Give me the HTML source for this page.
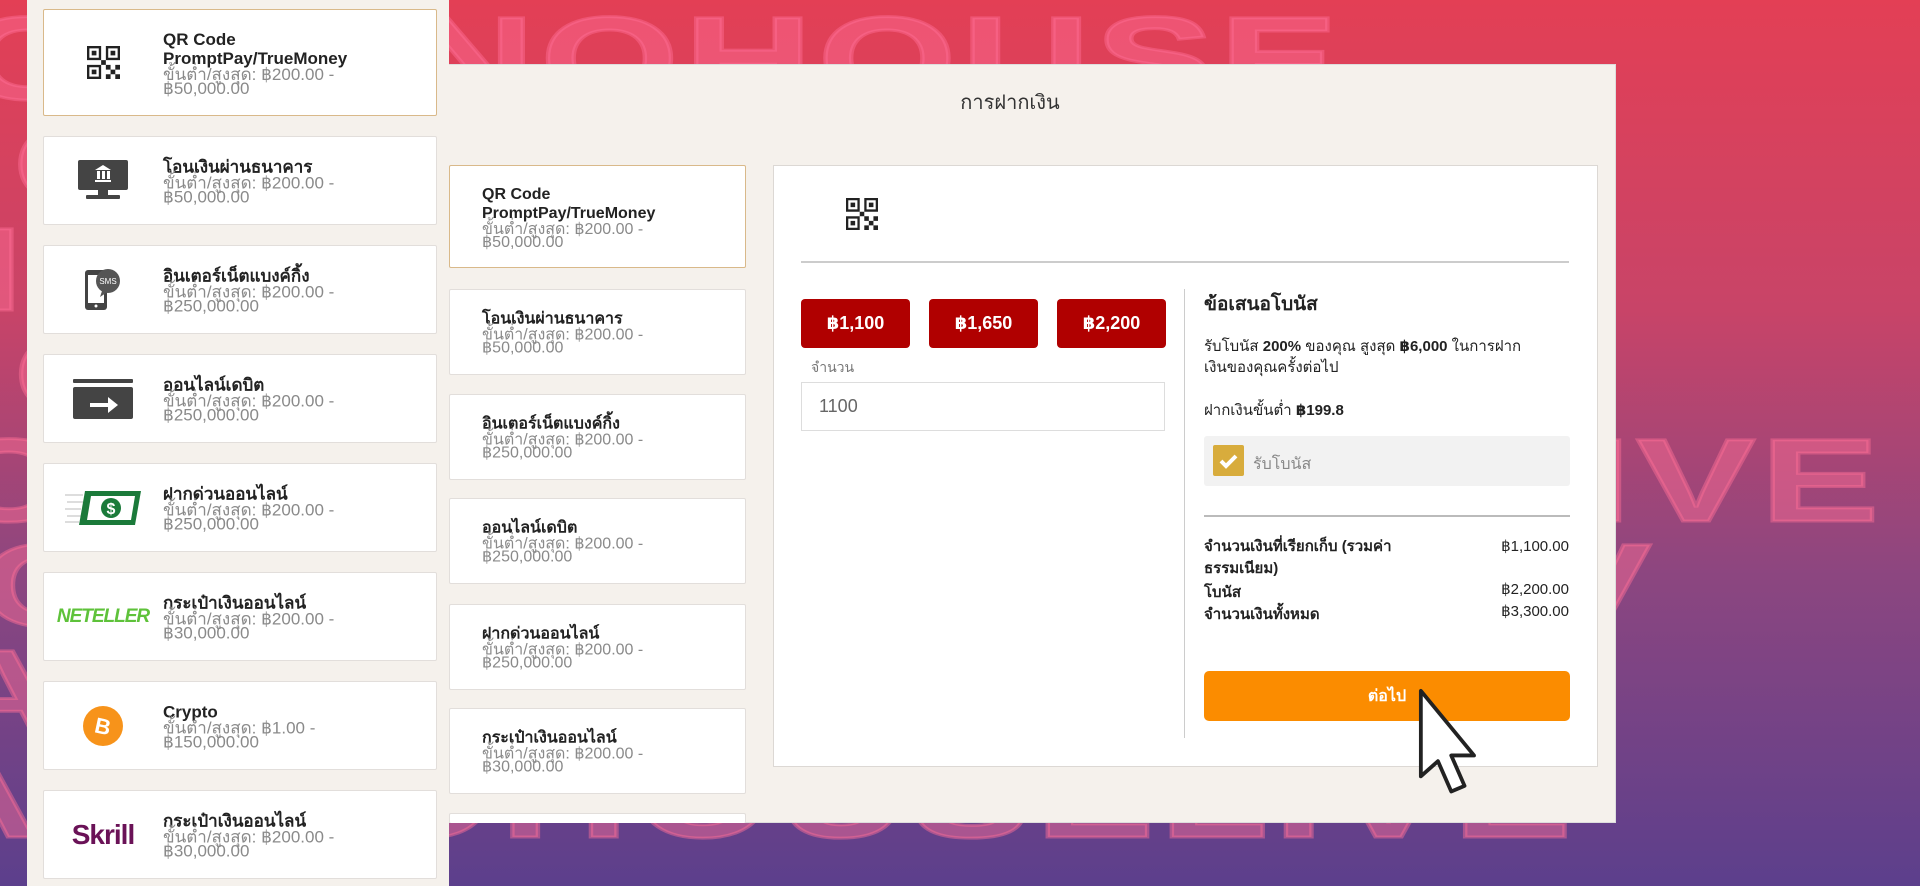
<!DOCTYPE html>
<html style="width:1920px;height:886px;overflow:hidden;background:#5a3f8c"><head><meta charset="utf-8">
<style>
*{margin:0;padding:0;box-sizing:border-box}
body{width:1920px;height:886px;overflow:hidden;position:relative;font-family:"Liberation Sans","DejaVu Sans","Noto Sans CJK SC",sans-serif}
.bg{position:absolute;left:0;top:0;width:1920px;height:886px;background:linear-gradient(180deg,#e33f55 0%,#c84468 35%,#8c4680 65%,#5c3f8c 100%);overflow:hidden}
.bgt{position:absolute;left:0;white-space:nowrap;font-weight:bold;font-size:118px;line-height:105px;color:rgba(255,110,150,0.45);transform-origin:0 0;transform:scaleX(1.5);letter-spacing:4px;-webkit-text-stroke:3px rgba(255,110,150,0.45)}
.abs{position:absolute}
.modal{left:404px;top:64px;width:1212px;height:759px;background:#f5f1ec;border:1px solid #ddd;overflow:hidden}
.title{left:404px;width:1212px;top:86px;text-align:center;font-size:20px;color:#333}
.left{left:27px;top:0;width:422px;height:886px;background:#f5f1ec}
.card{position:absolute;left:43px;width:394px;height:89px;background:#fff;border:1px solid #e2dedb;border-radius:2px}
.card .ic{position:absolute;left:0;width:118px;top:0;bottom:0;display:flex;align-items:center;justify-content:center}
.card .tx{position:absolute;left:119px;top:50%;transform:translateY(-50%);font-size:17px}
.t{font-weight:bold;color:#222;line-height:19px}
.g{color:#8a8a8a;line-height:14px;font-size:17px}
.mc{position:absolute;left:449px;width:297px;background:#fff;border:1px solid #e2dedb;border-radius:2px}
.mc .tx{position:absolute;left:32px;top:50%;transform:translateY(-50%);font-size:16px}
.mc .g{font-size:16px;line-height:13px}
.mc .t{line-height:19px}
.panel{left:773px;top:165px;width:825px;height:602px;background:#fff;border:1px solid #dcd8d4}
.btn{position:absolute;top:299px;width:109px;height:49px;background:#b00000;border-radius:4px;color:#fff;font-weight:bold;font-size:18px;display:flex;align-items:center;justify-content:center}
.row{position:absolute;left:1204px;width:365px;font-size:15px;color:#222;font-weight:bold;display:flex;justify-content:space-between}
.row span:last-child{font-weight:normal}
</style></head><body>
<div class="bg">
<div class="bgt" style="top:7px;left:-40px">CASINOHOUSE</div>
<div class="bgt" style="top:113px;left:-300px">SINOHOUSE</div>
<div class="bgt" style="top:218px;left:-150px">SINOHOUSE</div>
<div class="bgt" style="top:323px;left:-120px">HOUSECASINO</div>
<div class="bgt" style="top:429px;left:-60px">OHOUSECASINOLIVE</div>
<div class="bgt" style="top:534px;left:-20px">CASINOHOUSELIV</div>
<div class="bgt" style="top:640px;left:-200px">CASINOHOUSELIVE</div>
<div class="bgt" style="top:745px;left:-90px">ASINOHOUSELIVE</div>
</div>

<div class="abs modal"></div>
<div class="abs title">การฝากเงิน</div>

<div class="mc" style="top:165px;height:103px;border-color:#d9b98a"><div class="tx"><div class="t">QR Code<br>PromptPay/TrueMoney</div><div class="g">ขั้นต่ำ/สูงสุด: ฿200.00 -<br>฿50,000.00</div></div></div>
<div class="mc" style="top:289px;height:86px"><div class="tx"><div class="t">โอนเงินผ่านธนาคาร</div><div class="g">ขั้นต่ำ/สูงสุด: ฿200.00 -<br>฿50,000.00</div></div></div>
<div class="mc" style="top:394px;height:86px"><div class="tx"><div class="t">อินเตอร์เน็ตแบงค์กิ้ง</div><div class="g">ขั้นต่ำ/สูงสุด: ฿200.00 -<br>฿250,000.00</div></div></div>
<div class="mc" style="top:498px;height:86px"><div class="tx"><div class="t">ออนไลน์เดบิต</div><div class="g">ขั้นต่ำ/สูงสุด: ฿200.00 -<br>฿250,000.00</div></div></div>
<div class="mc" style="top:604px;height:86px"><div class="tx"><div class="t">ฝากด่วนออนไลน์</div><div class="g">ขั้นต่ำ/สูงสุด: ฿200.00 -<br>฿250,000.00</div></div></div>
<div class="mc" style="top:708px;height:86px"><div class="tx"><div class="t">กระเป๋าเงินออนไลน์</div><div class="g">ขั้นต่ำ/สูงสุด: ฿200.00 -<br>฿30,000.00</div></div></div>
<div class="mc" style="top:813px;height:10px;border-bottom:none"></div>

<div class="abs panel"></div>
<svg class="abs" style="left:846px;top:198px" width="32" height="32" viewBox="0 0 7 7"><path fill="#222" d="M0 0h3v3H0zM4 0h3v3H4zM0 4h3v3H0z"/><path fill="#fff" d="M.5.5h2v2h-2zM4.5.5h2v2h-2zM.5 4.5h2v2h-2z"/><path fill="#222" d="M1 1h1v1H1zM5 1h1v1H5zM1 5h1v1H1zM4 4h1v1H4zM5 5h1v1H5zM6 4h1v1H6zM4 6h1v1H4zM6 6h1v1H6zM3 3h1v1H3z"/></svg>
<div class="abs" style="left:801px;top:261px;width:768px;height:2px;background:#ccc"></div>
<div class="btn" style="left:801px">฿1,100</div>
<div class="btn" style="left:929px">฿1,650</div>
<div class="btn" style="left:1057px">฿2,200</div>
<div class="abs" style="left:811px;top:357px;font-size:14px;color:#777">จำนวน</div>
<div class="abs" style="left:801px;top:382px;width:364px;height:49px;border:1px solid #ddd;font-size:18px;color:#666;padding:13px 17px">1100</div>
<div class="abs" style="left:1184px;top:289px;width:1px;height:449px;background:#ccc"></div>
<div class="abs" style="left:1204px;top:289px;font-size:19px;font-weight:bold;color:#222">ข้อเสนอโบนัส</div>
<div class="abs" style="left:1204px;top:336px;width:370px;font-size:15px;line-height:21px;color:#222">รับโบนัส <b>200%</b> ของคุณ สูงสุด <b>฿6,000</b> ในการฝาก<br>เงินของคุณครั้งต่อไป</div>
<div class="abs" style="left:1204px;top:398px;font-size:15px;color:#222">ฝากเงินขั้นต่ำ <b>฿199.8</b></div>
<div class="abs" style="left:1204px;top:436px;width:366px;height:50px;background:#f2f2f2;border-radius:3px"></div>
<div class="abs" style="left:1213px;top:445px;width:31px;height:31px;background:#d8ac3c;border-radius:2px"><svg width="31" height="31" viewBox="0 0 31 31"><path d="M8 16l5 5 10-10" stroke="#fff" stroke-width="4" fill="none"/></svg></div>
<div class="abs" style="left:1253px;top:452px;font-size:16px;color:#888">รับโบนัส</div>
<div class="abs" style="left:1204px;top:515px;width:366px;height:2px;background:#bbb"></div>
<div class="row" style="top:536px;line-height:22px"><span>จำนวนเงินที่เรียกเก็บ (รวมค่า<br>ธรรมเนียม)</span><span>฿1,100.00</span></div>
<div class="row" style="top:580px"><span>โบนัส</span><span>฿2,200.00</span></div>
<div class="row" style="top:602px"><span>จำนวนเงินทั้งหมด</span><span>฿3,300.00</span></div>
<div class="abs" style="left:1204px;top:671px;width:366px;height:50px;background:#fb8c00;border-radius:5px;color:#fff;font-weight:bold;font-size:16px;display:flex;align-items:center;justify-content:center">ต่อไป</div>
<svg class="abs" style="left:1418px;top:688px" width="60" height="118" viewBox="0 0 60 118"><path d="M3 3v90l18-16 14 32 14-6-14-32h24z" fill="#fff" stroke="#222" stroke-width="4" stroke-linejoin="round" transform="scale(0.95)"/></svg>

<div class="abs left"></div>
<div class="card" style="top:9px;height:107px;border-color:#d9b98a"><div class="ic"><svg width="33" height="33" viewBox="0 0 7 7"><path fill="#222" d="M0 0h3v3H0zM4 0h3v3H4zM0 4h3v3H0z"/><path fill="#fff" d="M.5.5h2v2h-2zM4.5.5h2v2h-2zM.5 4.5h2v2h-2z"/><path fill="#222" d="M1 1h1v1H1zM5 1h1v1H5zM1 5h1v1H1zM4 4h1v1H4zM5 5h1v1H5zM6 4h1v1H6zM4 6h1v1H4zM6 6h1v1H6zM3 3h1v1H3z"/></svg></div><div class="tx"><div class="t">QR Code<br>PromptPay/TrueMoney</div><div class="g">ขั้นต่ำ/สูงสุด: ฿200.00 -<br>฿50,000.00</div></div></div>
<div class="card" style="top:136px"><div class="ic"><svg width="50" height="42" viewBox="0 0 50 42"><rect x="0" y="0" width="50" height="30" rx="2" fill="#444"/><rect x="20" y="30" width="10" height="5" fill="#444"/><rect x="8" y="35" width="34" height="4" rx="1" fill="#444"/><path d="M17 10l8-5 8 5zM17 22h16v-2H17zM19 11h3v8h-3zM24 11h3v8h-3zM29 11h3v8h-3z" fill="#fff"/></svg></div><div class="tx"><div class="t">โอนเงินผ่านธนาคาร</div><div class="g">ขั้นต่ำ/สูงสุด: ฿200.00 -<br>฿50,000.00</div></div></div>
<div class="card" style="top:245px"><div class="ic"><svg width="38" height="42" viewBox="0 0 38 42"><rect x="1" y="1" width="22" height="40" rx="3" fill="#444"/><rect x="4" y="6" width="16" height="28" fill="#fff"/><circle cx="12" cy="37" r="1.5" fill="#fff"/><circle cx="24" cy="12" r="12" fill="#555"/><path d="M18 22l-2 6 6-4z" fill="#555"/><text x="24" y="15" font-size="8" fill="#fff" text-anchor="middle" font-family="Liberation Sans">SMS</text></svg></div><div class="tx"><div class="t">อินเตอร์เน็ตแบงค์กิ้ง</div><div class="g">ขั้นต่ำ/สูงสุด: ฿200.00 -<br>฿250,000.00</div></div></div>
<div class="card" style="top:354px"><div class="ic"><svg width="60" height="40" viewBox="0 0 60 40"><rect x="0" y="0" width="60" height="4" rx="1" fill="#444"/><rect x="0" y="8" width="60" height="32" rx="2" fill="#444"/><path d="M17 24h18v-6l10 8-10 8v-6H17z" fill="#fff"/></svg></div><div class="tx"><div class="t">ออนไลน์เดบิต</div><div class="g">ขั้นต่ำ/สูงสุด: ฿200.00 -<br>฿250,000.00</div></div></div>
<div class="card" style="top:463px"><div class="ic"><svg width="76" height="36" viewBox="0 0 76 36"><path d="M0 5h18M2 12h16M0 19h16M2 26h14M0 32h14" stroke="#bbb" stroke-width="1"/><path d="M20 1h56l-6 34H14z" fill="#1b7a3a"/><path d="M26 6h44l-4 24H22z" fill="#fff"/><circle cx="46" cy="18" r="10" fill="#1b7a3a"/><text x="46" y="24" font-size="16" font-weight="bold" fill="#fff" text-anchor="middle" font-family="Liberation Sans">$</text></svg></div><div class="tx"><div class="t">ฝากด่วนออนไลน์</div><div class="g">ขั้นต่ำ/สูงสุด: ฿200.00 -<br>฿250,000.00</div></div></div>
<div class="card" style="top:572px"><div class="ic"><span style="font-style:italic;font-weight:bold;color:#5ec23a;font-size:19px;letter-spacing:-1px;font-family:'Liberation Sans',sans-serif">NETELLER</span></div><div class="tx"><div class="t">กระเป๋าเงินออนไลน์</div><div class="g">ขั้นต่ำ/สูงสุด: ฿200.00 -<br>฿30,000.00</div></div></div>
<div class="card" style="top:681px"><div class="ic"><svg width="40" height="40" viewBox="0 0 40 40"><circle cx="20" cy="20" r="20" fill="#f7931a"/><text x="20" y="28" font-size="22" font-weight="bold" fill="#fff" text-anchor="middle" font-family="Liberation Sans" transform="rotate(12 20 20)">B</text></svg></div><div class="tx"><div class="t">Crypto</div><div class="g">ขั้นต่ำ/สูงสุด: ฿1.00 -<br>฿150,000.00</div></div></div>
<div class="card" style="top:790px"><div class="ic"><span style="font-weight:bold;color:#6a1257;font-size:28px;letter-spacing:-1px;font-family:'Liberation Sans',sans-serif">Skrill</span></div><div class="tx"><div class="t">กระเป๋าเงินออนไลน์</div><div class="g">ขั้นต่ำ/สูงสุด: ฿200.00 -<br>฿30,000.00</div></div></div>
</body></html>
